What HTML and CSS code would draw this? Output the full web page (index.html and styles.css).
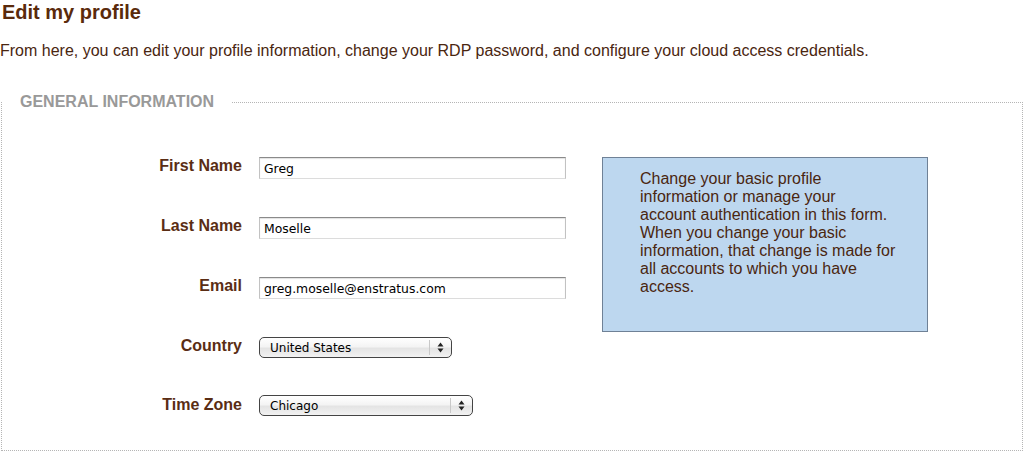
FILE: index.html
```html
<!DOCTYPE html>
<html>
<head>
<meta charset="utf-8">
<title>Edit my profile</title>
<link rel="stylesheet" href="styles.css">
</head>
<body>
<h1 class="title">Edit my profile</h1>
<p class="intro">From here, you can edit your profile information, change your RDP password, and configure your cloud access credentials.</p>
<fieldset class="section">
  <legend class="section-legend">General Information</legend>
  <div class="section-body">
    <div class="form">
      <label class="form-label" for="fn">First Name</label>
      <input class="text-input" id="fn" type="text" value="Greg">
      <label class="form-label" for="ln">Last Name</label>
      <input class="text-input" id="ln" type="text" value="Moselle">
      <label class="form-label" for="em">Email</label>
      <input class="text-input" id="em" type="text" value="greg.moselle@enstratus.com">
      <label class="form-label" for="co">Country</label>
      <div class="select-wrap select-country">
        <select class="select" id="co"><option>United States</option></select>
        <span class="select-arrow"><svg width="7" height="11" viewBox="0 0 7 11"><path d="M3.5 0.5 L6.5 4.5 L0.5 4.5 Z M0.5 6.5 L6.5 6.5 L3.5 10.5 Z" fill="#222"/></svg></span>
      </div>
      <label class="form-label" for="tz">Time Zone</label>
      <div class="select-wrap select-tz">
        <select class="select" id="tz"><option>Chicago</option></select>
        <span class="select-arrow"><svg width="7" height="11" viewBox="0 0 7 11"><path d="M3.5 0.5 L6.5 4.5 L0.5 4.5 Z M0.5 6.5 L6.5 6.5 L3.5 10.5 Z" fill="#222"/></svg></span>
      </div>
    </div>
    <div class="info-box">Change your basic profile information or manage your account authentication in this form. When you change your basic information, that change is made for all accounts to which you have access.</div>
  </div>
</fieldset>
</body>
</html>
```
FILE: styles.css
```css
html, body {
  margin: 0;
  padding: 0;
  background: #fff;
}
body {
  font-family: "Liberation Sans", Arial, sans-serif;
  color: #4a2610;
  width: 1023px;
}
.title {
  margin: 0 0 0 2px;
  padding-top: 1px;
  font-size: 20px;
  line-height: 22px;
  font-weight: bold;
  color: #5a2a0b;
}
.intro {
  margin: 19px 0 0 0;
  font-size: 16px;
  line-height: 18px;
  color: #4a2610;
}
.section {
  margin: 33px 0 0 1px;
  padding: 0;
  border: 1px dotted #b5b5b5;
  min-inline-size: 0;
  box-sizing: border-box;
  width: 1022px;
  height: 358px;
}
.section-legend {
  margin-left: 0;
  padding: 0 18px;
  font-size: 16px;
  line-height: 18px;
  font-weight: bold;
  text-transform: uppercase;
  color: #999;
}
.section-body {
  display: flex;
  align-items: flex-start;
  padding-top: 46px;
}
.form {
  width: 600px;
  display: grid;
  grid-template-columns: 240px auto;
  column-gap: 17px;
  row-gap: 38px;
  align-items: start;
  justify-items: start;
}
.form-label {
  justify-self: end;
  font-size: 16px;
  line-height: 18px;
  font-weight: bold;
  color: #5a2d14;
}
.text-input {
  box-sizing: border-box;
  width: 307px;
  height: 22px;
  margin: 0;
  padding: 0 4px;
  font-family: "DejaVu Sans", sans-serif;
  font-size: 12.4px;
  color: #000;
  border: 1px solid #c2c2c2;
  border-top-color: #8a8a8a;
  border-bottom-color: #dcdcdc;
  box-shadow: inset 0 1px 1px rgba(0,0,0,0.12);
  outline: none;
}
.select-wrap {
  position: relative;
  height: 21px;
}
.select-country { width: 193px; }
.select-tz { width: 214px; margin-top: -1px; }
.select {
  -webkit-appearance: none;
  appearance: none;
  box-sizing: border-box;
  width: 100%;
  height: 21px;
  margin: 0;
  padding: 0 24px 0 10px;
  font-family: "DejaVu Sans", sans-serif;
  font-size: 12px;
  color: #000;
  border: 1px solid #444;
  border-radius: 5px;
  background: linear-gradient(#ffffff 0%, #f4f4f4 45%, #e4e4e4 55%, #f2f2f2 100%);
  outline: none;
}
.select-arrow {
  position: absolute;
  top: 3px;
  right: 1px;
  width: 21px;
  height: 15px;
  border-left: 1px solid #c8c8c8;
  display: flex;
  align-items: center;
  justify-content: center;
  pointer-events: none;
}
.info-box {
  box-sizing: border-box;
  width: 326px;
  height: 175px;
  padding: 12px 31.6px 0 37px;
  background: #bdd7ef;
  border: 1px solid #6f8196;
  font-size: 16px;
  line-height: 18px;
  color: #4a2610;
}
```
